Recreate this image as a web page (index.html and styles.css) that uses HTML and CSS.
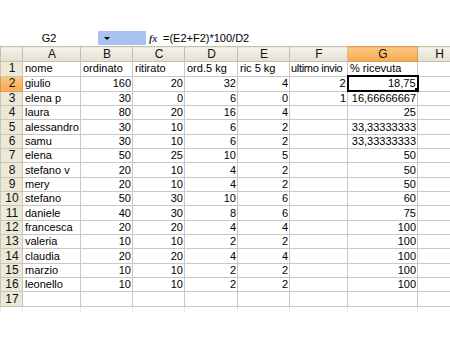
FILE: index.html
```html
<!DOCTYPE html>
<html lang="it">
<head>
    <meta charset="UTF-8">
    <title>Foglio1</title>
    <link rel="stylesheet" href="styles.css">
</head>
<body>
    <div class="sheet">
        <div class="formula-bar">
            <div class="name-box">G2</div>
            <div class="name-drop"><span class="arrow"></span></div>
            <div class="fx">fx</div>
            <div class="formula">=(E2+F2)*100/D2</div>
        </div>
        <table class="grid">
            <colgroup>
                <col class="c-row">
                <col class="c-a">
                <col class="c-b">
                <col class="c-c">
                <col class="c-d">
                <col class="c-e">
                <col class="c-f">
                <col class="c-g">
                <col class="c-h">
            </colgroup>
            <thead>
                <tr>
                    <th class="corner"></th>
                    <th>A</th><th>B</th><th>C</th><th>D</th><th>E</th><th>F</th>
                    <th class="active">G</th><th>H</th>
                </tr>
            </thead>
            <tbody>
                <tr><th>1</th><td>nome</td><td>ordinato</td><td>ritirato</td><td>ord.5 kg</td><td>ric 5 kg</td><td class="tight">ultimo invio</td><td>% ricevuta</td><td></td></tr>
                <tr><th class="active">2</th><td>giulio</td><td class="n">160</td><td class="n">20</td><td class="n">32</td><td class="n">4</td><td class="n">2</td><td class="n selected">18,75<span class="handle"></span></td><td></td></tr>
                <tr><th>3</th><td>elena p</td><td class="n">30</td><td class="n">0</td><td class="n">6</td><td class="n">0</td><td class="n">1</td><td class="n">16,66666667</td><td></td></tr>
                <tr><th>4</th><td>laura</td><td class="n">80</td><td class="n">20</td><td class="n">16</td><td class="n">4</td><td></td><td class="n">25</td><td></td></tr>
                <tr><th>5</th><td>alessandro</td><td class="n">30</td><td class="n">10</td><td class="n">6</td><td class="n">2</td><td></td><td class="n">33,33333333</td><td></td></tr>
                <tr><th>6</th><td>samu</td><td class="n">30</td><td class="n">10</td><td class="n">6</td><td class="n">2</td><td></td><td class="n">33,33333333</td><td></td></tr>
                <tr><th>7</th><td>elena</td><td class="n">50</td><td class="n">25</td><td class="n">10</td><td class="n">5</td><td></td><td class="n">50</td><td></td></tr>
                <tr><th>8</th><td>stefano v</td><td class="n">20</td><td class="n">10</td><td class="n">4</td><td class="n">2</td><td></td><td class="n">50</td><td></td></tr>
                <tr><th>9</th><td>mery</td><td class="n">20</td><td class="n">10</td><td class="n">4</td><td class="n">2</td><td></td><td class="n">50</td><td></td></tr>
                <tr><th>10</th><td>stefano</td><td class="n">50</td><td class="n">30</td><td class="n">10</td><td class="n">6</td><td></td><td class="n">60</td><td></td></tr>
                <tr><th>11</th><td>daniele</td><td class="n">40</td><td class="n">30</td><td class="n">8</td><td class="n">6</td><td></td><td class="n">75</td><td></td></tr>
                <tr><th>12</th><td>francesca</td><td class="n">20</td><td class="n">20</td><td class="n">4</td><td class="n">4</td><td></td><td class="n">100</td><td></td></tr>
                <tr><th>13</th><td>valeria</td><td class="n">10</td><td class="n">10</td><td class="n">2</td><td class="n">2</td><td></td><td class="n">100</td><td></td></tr>
                <tr><th>14</th><td>claudia</td><td class="n">20</td><td class="n">20</td><td class="n">4</td><td class="n">4</td><td></td><td class="n">100</td><td></td></tr>
                <tr><th>15</th><td>marzio</td><td class="n">10</td><td class="n">10</td><td class="n">2</td><td class="n">2</td><td></td><td class="n">100</td><td></td></tr>
                <tr><th>16</th><td>leonello</td><td class="n">10</td><td class="n">10</td><td class="n">2</td><td class="n">2</td><td></td><td class="n">100</td><td></td></tr>
                <tr><th>17</th><td></td><td></td><td></td><td></td><td></td><td></td><td></td><td></td></tr>
                <tr class="fade"><th></th><td></td><td></td><td></td><td></td><td></td><td></td><td></td><td></td></tr>
            </tbody>
        </table>
    </div>
</body>
</html>
```

FILE: styles.css
```css
/* Spreadsheet look */
body {
    margin: 0;
    background: #fff;
    font-family: "Liberation Sans", Arial, sans-serif;
    font-size: 11px;
    color: #000;
    overflow: hidden;
}

.sheet {
    padding-top: 30px;
    width: 450px;
}

.formula-bar {
    display: flex;
    align-items: center;
    height: 16px;
    font-size: 11px;
}

.name-box {
    width: 98px;
    text-align: center;
}

.name-drop {
    width: 48px;
    height: 14px;
    background: #a9c3f1;
    display: flex;
    align-items: center;
    padding-left: 6px;
    box-sizing: border-box;
}

.arrow {
    width: 0;
    height: 0;
    border-left: 3px solid transparent;
    border-right: 3px solid transparent;
    border-top: 3px solid #000;
}

.fx {
    width: 17px;
    padding-left: 3px;
    box-sizing: border-box;
    font-family: "Liberation Serif", serif;
    font-style: italic;
    font-weight: bold;
    font-size: 10px;
    color: #333;
}

.grid {
    border-collapse: collapse;
    table-layout: fixed;
    width: 460px;
}

.c-row { width: 22px; }
.c-a { width: 58px; }
.c-b { width: 52px; }
.c-c { width: 52px; }
.c-d { width: 53px; }
.c-e { width: 52px; }
.c-f { width: 58px; }
.c-g { width: 70px; }
.c-h { width: 43px; }

.grid th,
.grid td {
    padding: 0 1px 0 2px;
    white-space: nowrap;
    overflow: hidden;
    line-height: 13px;
}

.grid td.tight {
    letter-spacing: -0.3px;
    padding-left: 1px;
}

.grid thead tr {
    height: 15px;
}

.grid tbody tr {
    height: 14.35px;
}

.grid thead th {
    font-weight: normal;
    font-size: 12px;
    background: linear-gradient(#f4f3ec, #e3e0d1);
    border: 1px solid #c3c0ae;
    text-align: center;
    color: #111;
}

.grid tbody th {
    font-weight: normal;
    font-size: 12px;
    background: #ece9d8;
    border: 1px solid #c9c6b4;
    text-align: center;
    color: #111;
}

.grid th.active {
    background: linear-gradient(#fbc883, #f5ab52);
    border-color: #d79a4e;
}

.grid td {
    border: 1px solid #c8c8c8;
    text-align: left;
}

.grid td.n {
    text-align: right;
}

.grid td.selected {
    position: relative;
    border: 2px solid #000;
}

.handle {
    position: absolute;
    right: -3px;
    bottom: -3px;
    width: 4px;
    height: 4px;
    background: #000;
    border: 1px solid #fff;
}

/* grid lines fading out under the last row */
.grid tr.fade {
    height: 6px;
}

.grid tr.fade th,
.grid tr.fade td {
    background: none;
    border-top: none;
    border-bottom: none;
    border-left-color: #ececec;
    border-right-color: #ececec;
    line-height: 6px;
}
```
